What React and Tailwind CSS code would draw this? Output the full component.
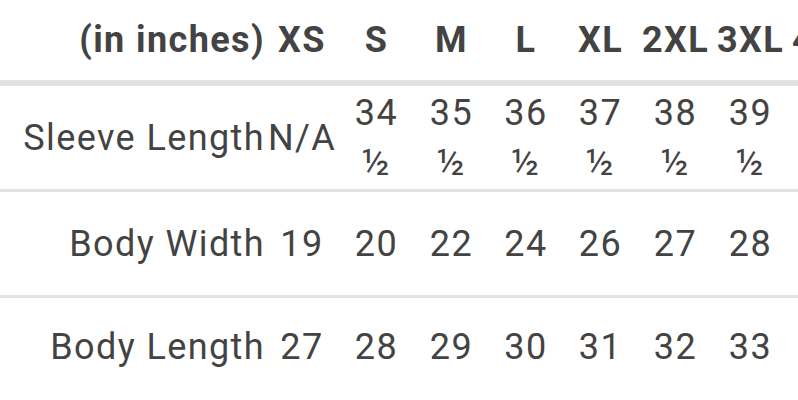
export default function App() {
  const cols = "grid grid-cols-[265px_74px_75px_75px_74px_75px_75px_75px_75px] w-max";
  const sizes = ["XS", "S", "M", "L", "XL", "2XL", "3XL", "4XL"];
  const rows = [
    { label: "Sleeve Length", values: [["N/A"], ["34", "½"], ["35", "½"], ["36", "½"], ["37", "½"], ["38", "½"], ["39", "½"], ["40", "½"]] },
    { label: "Body Width", values: [["19"], ["20"], ["22"], ["24"], ["26"], ["27"], ["28"], ["30"]] },
    { label: "Body Length", values: [["27"], ["28"], ["29"], ["30"], ["31"], ["32"], ["33"], ["34"]] },
  ];
  return (
    <div className="w-[798px] h-[400px] overflow-hidden bg-white font-['Roboto',sans-serif] text-[36px] text-[#434343] tracking-[1.4px]">
      <div className={`${cols} h-[86px] border-b-[6px] border-[#e1e1e6] font-bold items-center`}>
        <div className="text-right pr-[0px] leading-none">(in inches)</div>
        {sizes.map((s) => (
          <div key={s} className="text-center leading-none">{s}</div>
        ))}
      </div>
      {rows.map((r, ri) => (
        <div
          key={r.label}
          className={
            ri < rows.length - 1
              ? `${cols} h-[106px] border-b-[3px] border-[#e2e2e5] items-center`
              : `${cols} h-[98px] items-center`
          }
        >
          <div className="text-right leading-none">{r.label}</div>
          {r.values.map((v, i) => (
            <div key={i} className="text-center flex flex-col items-center">
              {v.map((t, j) => (
                <span key={j} className="leading-[50px]">{t}</span>
              ))}
            </div>
          ))}
        </div>
      ))}
    </div>
  );
}
